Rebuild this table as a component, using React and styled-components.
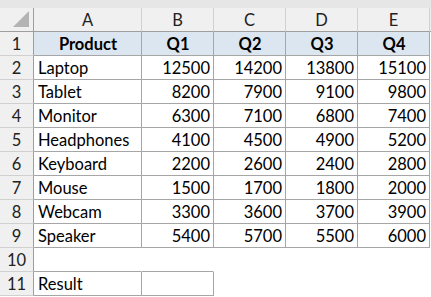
import React from "react";
import styled, { createGlobalStyle } from "styled-components";

const GlobalStyle = createGlobalStyle`
  html, body {
    margin: 0;
    padding: 0;
    background: #ffffff;
  }
  body {
    font-family: Lato, "Liberation Sans", sans-serif;
  }
`;

const COLS = ["A", "B", "C", "D", "E"];

const ROWS = [
  ["Laptop", 12500, 14200, 13800, 15100],
  ["Tablet", 8200, 7900, 9100, 9800],
  ["Monitor", 6300, 7100, 6800, 7400],
  ["Headphones", 4100, 4500, 4900, 5200],
  ["Keyboard", 2200, 2600, 2400, 2800],
  ["Mouse", 1500, 1700, 1800, 2000],
  ["Webcam", 3300, 3600, 3700, 3900],
  ["Speaker", 5400, 5700, 5500, 6000],
];

const GRID = "#a6a6a6";
const HEAD_LINE = "#d0d0d0";
const HEAD_EDGE = "#9e9e9e";

const Sheet = styled.div`
  display: grid;
  grid-template-columns: 34px 108px 72px 72px 72px 72px 1fr;
  grid-template-rows: 8px 24px;
  grid-auto-rows: 24px;
  width: 431px;
  height: 297px;
  overflow: hidden;
  background: #ffffff;
  font-size: 16.5px;
  color: #000000;
`;

const TopStrip = styled.div`
  grid-column: 1 / -1;
  background: #e6e6e6;
`;

const Corner = styled.div`
  box-sizing: border-box;
  display: flex;
  justify-content: flex-end;
  align-items: flex-end;
  padding: 0 4px 4px 0;
  background: #f0f0f0;
  border-right: 1px solid ${HEAD_EDGE};
  border-bottom: 1px solid ${HEAD_EDGE};
`;

const Triangle = styled.div`
  width: 16px;
  height: 16px;
  background: #b4b4b4;
  clip-path: polygon(100% 0, 100% 100%, 0 100%);
`;

const ColHead = styled.div`
  box-sizing: border-box;
  display: flex;
  align-items: center;
  justify-content: center;
  background: #f0f0f0;
  color: #222222;
  border-right: 1px solid ${HEAD_LINE};
  border-bottom: 1px solid ${HEAD_EDGE};
`;

const RowHead = styled.div`
  box-sizing: border-box;
  display: flex;
  align-items: center;
  justify-content: center;
  background: #f0f0f0;
  color: #222222;
  border-right: 1px solid ${HEAD_EDGE};
  border-bottom: 1px solid ${HEAD_LINE};
`;

const Cell = styled.div`
  box-sizing: border-box;
  display: flex;
  align-items: center;
  padding: 1px 3px 0 4px;
  white-space: nowrap;
  overflow: hidden;
  justify-content: ${(p) => (p.$center ? "center" : p.$num ? "flex-end" : "flex-start")};
  font-weight: ${(p) => (p.$bold ? 700 : 400)};
  background: ${(p) => (p.$fill ? "#dce6f1" : "#ffffff")};
  border-right: 1px solid ${(p) => (p.$right ? GRID : "transparent")};
  border-bottom: 1px solid ${(p) => (p.$bottom ? GRID : "transparent")};
`;

export default function App() {
  return (
    <>
      <GlobalStyle />
      <Sheet>
        <TopStrip />
        <Corner>
          <Triangle />
        </Corner>
        {COLS.map((c) => (
          <ColHead key={c}>{c}</ColHead>
        ))}
        <ColHead />

        <RowHead>1</RowHead>
        <Cell $center $bold $fill $right $bottom>
          Product
        </Cell>
        {["Q1", "Q2", "Q3", "Q4"].map((q) => (
          <Cell key={q} $center $bold $fill $right $bottom>
            {q}
          </Cell>
        ))}
        <Cell />

        {ROWS.map((row, i) => (
          <React.Fragment key={row[0]}>
            <RowHead>{i + 2}</RowHead>
            {row.map((v, j) => (
              <Cell key={j} $num={j > 0} $right $bottom>
                {v}
              </Cell>
            ))}
            <Cell />
          </React.Fragment>
        ))}

        <RowHead>10</RowHead>
        <Cell $bottom />
        <Cell $bottom />
        <Cell />
        <Cell />
        <Cell />
        <Cell />

        <RowHead>11</RowHead>
        <Cell $right $bottom>
          Result
        </Cell>
        <Cell $right $bottom />
        <Cell />
        <Cell />
        <Cell />
        <Cell />
      </Sheet>
    </>
  );
}
